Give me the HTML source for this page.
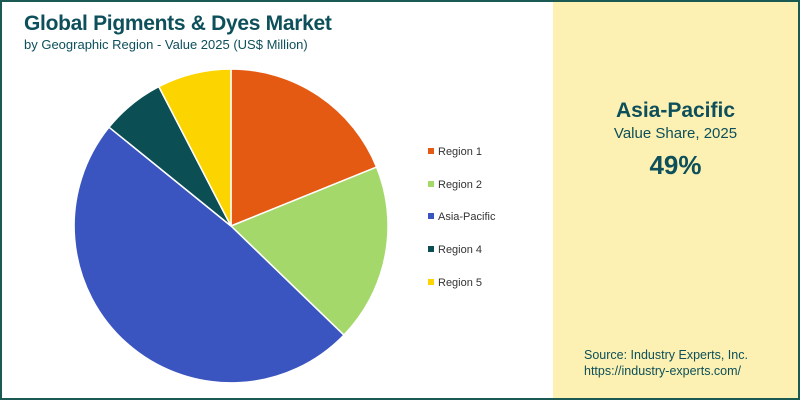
<!DOCTYPE html>
<html><head><style>
body{margin:0;width:800px;height:400px;overflow:hidden;font-family:"Liberation Sans",sans-serif;}
.frame{position:absolute;left:0;top:0;width:796px;height:396px;border:2px solid #1b5a52;background:#fff;}
.t1{position:absolute;left:24px;top:12px;font-size:21px;font-weight:bold;color:#0d4f5a;letter-spacing:-0.3px}
.t2{position:absolute;left:24px;top:37px;font-size:13px;color:#0d4f5a}
.panel{position:absolute;left:553px;top:2px;width:245px;height:396px;background:#fcf0b2}
.c{position:absolute;left:0;width:245px;text-align:center;color:#0d4f5a}
.lg{position:absolute;left:428px;font-size:11px;color:#333;}
.lg i{display:inline-block;width:6px;height:6px;margin-right:4px;vertical-align:1px}
.src{position:absolute;left:31px;font-size:12.5px;color:#0d4f5a}
</style></head><body>
<div class="frame"></div>
<div class="t1">Global Pigments &amp; Dyes Market</div>
<div class="t2">by Geographic Region - Value 2025 (US$ Million)</div>
<svg style="position:absolute;left:0;top:0" width="550" height="400">
<g stroke="#fff" stroke-width="1.5">
<path d="M231,226 L231,69 A157,157 0 0 1 376.6,167.1 Z" fill="#e55a12"/>
<path d="M231,226 L376.6,167.1 A157,157 0 0 1 343.9,335.1 Z" fill="#a5d86b"/>
<path d="M231,226 L343.9,335.1 A157,157 0 0 1 109,127.2 Z" fill="#3a55bf"/>
<path d="M231,226 L109,127.2 A157,157 0 0 1 158.8,86.6 Z" fill="#0b4f55"/>
<path d="M231,226 L158.8,86.6 A157,157 0 0 1 231,69 Z" fill="#fcd500"/>
</g></svg>
<div class="lg" style="top:146px"><i style="background:#e55a12"></i>Region 1</div>
<div class="lg" style="top:179px"><i style="background:#a5d86b"></i>Region 2</div>
<div class="lg" style="top:211px"><i style="background:#3a55bf"></i>Asia-Pacific</div>
<div class="lg" style="top:244px"><i style="background:#0b4f55"></i>Region 4</div>
<div class="lg" style="top:277px"><i style="background:#fcd500"></i>Region 5</div>
<div class="panel">
<div class="c" style="top:97px;font-size:21px;font-weight:bold">Asia-Pacific</div>
<div class="c" style="top:123px;font-size:15px">Value Share, 2025</div>
<div class="c" style="top:148px;font-size:26px;font-weight:bold">49%</div>
<div class="src" style="top:346px">Source: Industry Experts, Inc.</div>
<div class="src" style="top:362px">https://industry-experts.com/</div>
</div>
</body></html>
